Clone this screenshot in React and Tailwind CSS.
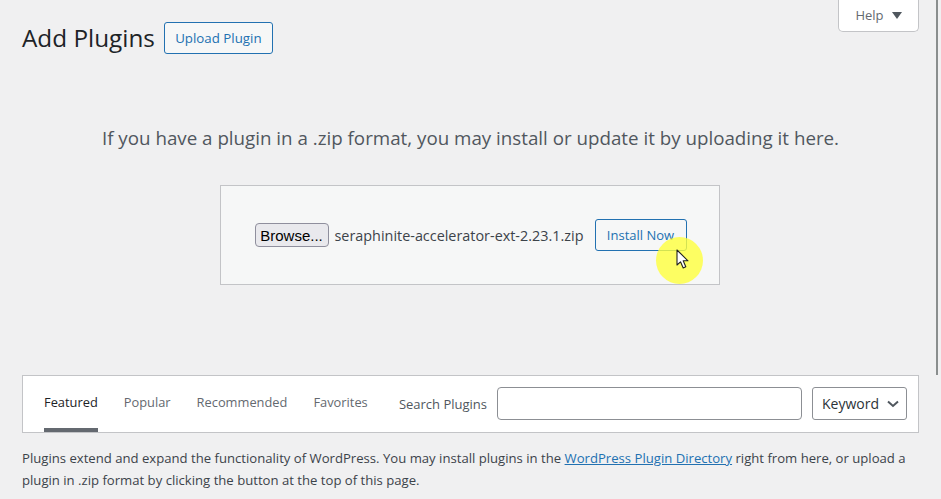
import React from 'react';

const font = "font-['Open_Sans','Liberation_Sans',sans-serif]";

const tabs = ['Featured', 'Popular', 'Recommended', 'Favorites'];

const CursorHighlight = () => (
  <div className="absolute left-[656px] top-[237px] w-[47px] h-[47px] rounded-full bg-[#ffff3c]/80">
    <svg className="absolute left-[20px] top-[12px]" width="14" height="21" viewBox="0 0 14 21">
      <path d="M1 1 L1 16 L4.5 12.8 L7.2 19 L9.8 17.8 L7.2 11.8 L12 11.8 Z" fill="#fff" stroke="#222" strokeWidth="1.1" strokeLinejoin="round" />
    </svg>
  </div>
);

const App = () => {
  return (
    <div className={`relative w-[941px] h-[499px] overflow-hidden bg-[#f0f0f1] text-[#3c434a] ${font}`}>
      {/* stray window edge on the right */}
      <div className="absolute left-[936px] top-0 w-[2px] h-[375px] bg-[#8a8e8e]" />

      {/* help tab */}
      <div className="flex justify-end pr-[22px] h-[32px]">
        <div className="w-[81px] h-[32px] bg-white border border-t-0 border-[#c3c4c7] rounded-b-[5px] flex items-center justify-center gap-[8px] text-[13px] text-[#646970]">
          <span>Help</span>
          <span className="w-0 h-0 border-x-[5px] border-x-transparent border-t-[7px] border-t-[#50575e]" />
        </div>
      </div>

      <div className="px-[22px] -mt-[10px] flex items-center gap-[9px] h-[32px]">
        <h1 className="text-[24.3px] text-[#1d2327]">Add Plugins</h1>
        <button className="h-[32px] w-[109px] border border-[#2271b1] rounded-[3px] bg-[#f6f7f7] text-[13.3px] text-[#2271b1] pt-[1px]">Upload Plugin</button>
      </div>

      <p className="mt-[70px] text-center text-[18.75px] leading-[28px] text-[#50575e]">
        If you have a plugin in a .zip format, you may install or update it by uploading it here.
      </p>

      <div className="mt-[33px] mx-auto w-[500px] h-[100px] border border-[#c3c4c7] bg-[#f6f7f7] flex items-center pl-[34px] relative left-[-1px]">
        <button className="h-[24px] w-[74px] border border-[#8f8f9d] rounded-[4px] bg-[#e9e9ed] text-[15px] text-black pt-[1px] font-['Liberation_Sans',sans-serif]">Browse...</button>
        <span className="ml-[6px] text-[14.4px] text-[#3c434a] w-[260px] whitespace-nowrap pt-[1px]">seraphinite-accelerator-ext-2.23.1.zip</span>
        <button className="h-[32px] w-[92px] border border-[#2271b1] rounded-[3px] bg-[#f6f7f7] text-[13px] text-[#2271b1] pt-[1px]">Install Now</button>
      </div>

      <div className="mt-[90px] mx-[22px] h-[58px] bg-white border border-[#c3c4c7] flex items-stretch pl-[21px] pr-[11px]">
        <div className="flex gap-[26px]">
          {tabs.map((tab, i) => (
            <div key={tab} className={`h-[56px] pt-[17px] text-[12.85px] ${i === 0 ? 'text-[#1d2327] border-b-4 border-[#646970]' : 'text-[#646970]'}`}>
              {tab}
            </div>
          ))}
        </div>
        <div className="ml-auto flex items-center pb-[1px]">
          <span className="text-[13px] text-[#50575e] pt-[2px]">Search Plugins</span>
          <input className="ml-[10px] w-[305px] h-[33px] bg-white border border-[#8c8f94] rounded-[4px]" />
          <div className="ml-[10px] w-[95px] h-[33px] bg-white border border-[#8c8f94] rounded-[3px] flex items-center justify-between pl-[9px] pr-[7px] text-[14px] text-[#2c3338]">
            <span>Keyword</span>
            <svg width="12" height="8" viewBox="0 0 12 8" fill="none">
              <path d="M1 1.5 L6 6 L11 1.5" stroke="#50575e" strokeWidth="2" />
            </svg>
          </div>
        </div>
      </div>

      <p className="mt-[14px] mx-[22px] text-[13.13px] leading-[22px] text-[#3c434a]">
        Plugins extend and expand the functionality of WordPress. You may install plugins in the <a className="text-[#2271b1] underline">WordPress Plugin Directory</a> right from here, or upload a plugin in .zip format by clicking the button at the top of this page.
      </p>

      <CursorHighlight />
    </div>
  );
};

export default App;
